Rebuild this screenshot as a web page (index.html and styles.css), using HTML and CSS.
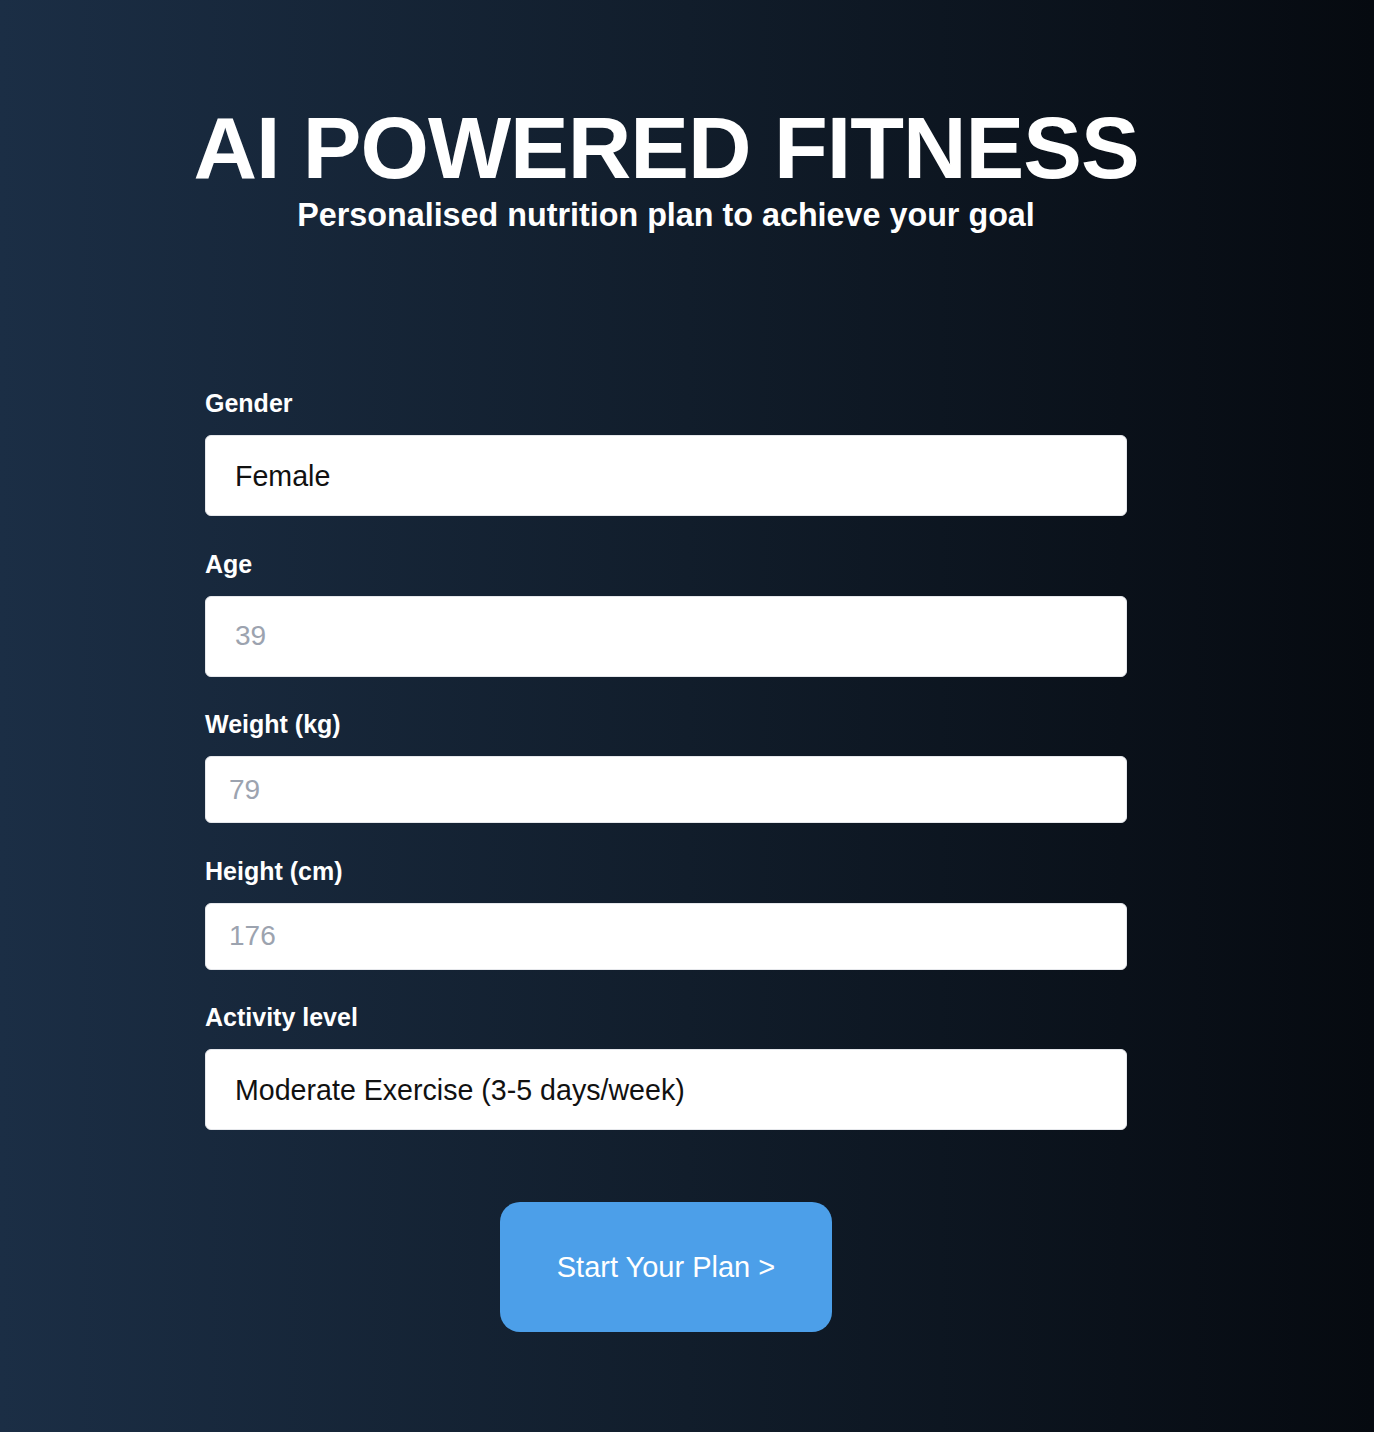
FILE: index.html
```html
<!DOCTYPE html>
<html lang="en">
<head>
<meta charset="utf-8">
<title>AI Powered Fitness</title>
<link rel="stylesheet" href="styles.css">
</head>
<body>
<div class="page">
  <main class="column">
    <header class="hero">
      <h1 class="title">AI POWERED FITNESS</h1>
      <p class="subtitle">Personalised nutrition plan to achieve your goal</p>
    </header>
    <form class="form">
      <div class="field">
        <label class="label" for="gender">Gender</label>
        <select class="control control-tall control-select" id="gender">
          <option>Female</option>
          <option>Male</option>
        </select>
      </div>
      <div class="field">
        <label class="label" for="age">Age</label>
        <input class="control control-tall" id="age" type="number" placeholder="39">
      </div>
      <div class="field">
        <label class="label" for="weight">Weight (kg)</label>
        <input class="control control-short" id="weight" type="number" placeholder="79">
      </div>
      <div class="field">
        <label class="label" for="height">Height (cm)</label>
        <input class="control control-short" id="height" type="number" placeholder="176">
      </div>
      <div class="field">
        <label class="label" for="activity">Activity level</label>
        <select class="control control-tall control-select" id="activity">
          <option>Moderate Exercise (3-5 days/week)</option>
          <option>Sedentary</option>
        </select>
      </div>
      <div class="actions">
        <button class="start" type="button">Start Your Plan &gt;</button>
      </div>
    </form>
  </main>
</div>
</body>
</html>
```

FILE: styles.css
```css
* {
  box-sizing: border-box;
}

html, body {
  margin: 0;
  padding: 0;
}

body {
  min-height: 100vh;
  background: linear-gradient(to right, #1b2e45 0%, #111d2b 50%, #060a10 100%);
  font-family: "Liberation Sans", Arial, Helvetica, sans-serif;
  color: #ffffff;
}

.page {
  display: flex;
  justify-content: center;
  padding: 104px 42px 101px 0;
}

.column {
  width: 960px;
  display: flex;
  flex-direction: column;
  align-items: center;
}

.hero {
  width: 100%;
  text-align: center;
}

.title {
  margin: 0;
  font-size: 88px;
  line-height: 88px;
  font-weight: 700;
  letter-spacing: -1px;
}

.subtitle {
  margin: 5px 0 0;
  font-size: 32.3px;
  line-height: 36px;
  font-weight: 700;
}

.form {
  width: 922px;
  margin-top: 155px;
  display: flex;
  flex-direction: column;
  gap: 32.5px;
}

.field {
  display: flex;
  flex-direction: column;
}

.label {
  font-size: 25px;
  line-height: 30px;
  font-weight: 700;
  margin-bottom: 17px;
}

.control {
  -webkit-appearance: none;
  appearance: none;
  width: 100%;
  background: #ffffff;
  border: 1px solid #e5e7eb;
  border-radius: 6px;
  font-family: inherit;
  font-size: 28px;
  color: #111111;
  outline: none;
  margin: 0;
}

.control-select {
  font-size: 28.6px;
}

.control::placeholder {
  color: #9ca3af;
}

.control-tall {
  height: 81px;
  padding: 0 29px;
}

.control-short {
  height: 67px;
  padding: 0 23px;
}

.actions {
  display: flex;
  justify-content: center;
  margin-top: 39.5px;
}

.start {
  width: 332px;
  height: 130px;
  border: none;
  border-radius: 20px;
  background: #4c9fe9;
  color: #ffffff;
  font-family: inherit;
  font-size: 29px;
  cursor: pointer;
}
```
